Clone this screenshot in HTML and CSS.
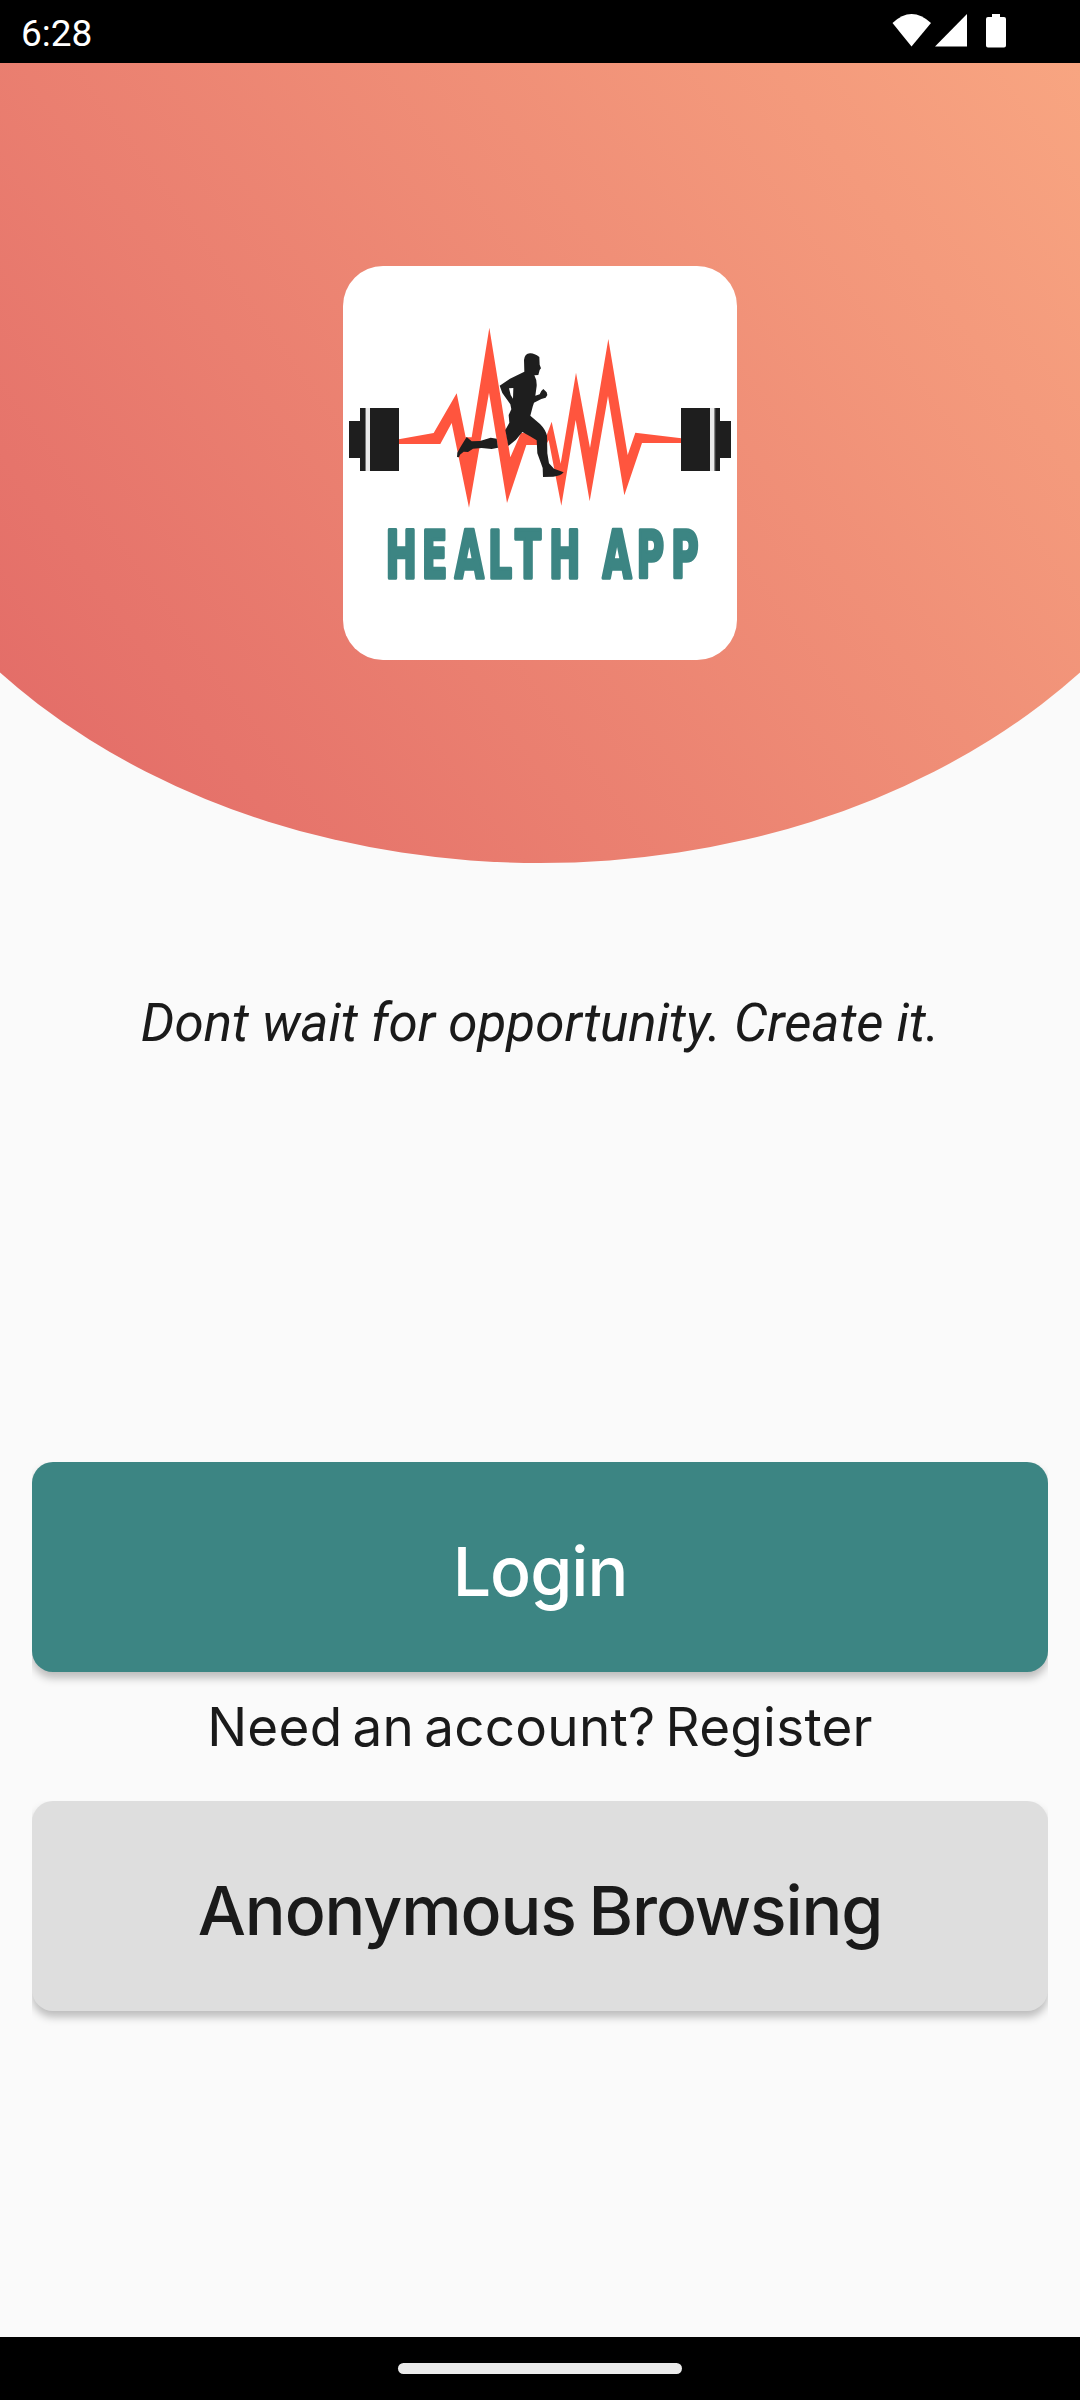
FILE: index.html
```html
<!DOCTYPE html>
<html lang="en">
<head>
<meta charset="utf-8">
<title>Health App</title>
<link rel="stylesheet" href="styles.css">
</head>
<body>
<div class="screen">
  <div class="status-bar">
    <span class="clock">6:28</span>
    <svg class="status-icons" width="116" height="36" viewBox="0 0 116 36" fill="#fff">
      <path d="M0.500 9Q19.500-9 39 9L19.500 32.500Z"/>
      <path d="M43 32.500L75 0V32.500Z"/>
      <path d="M100 0h8v3h4q2 0 2 2v26.500q0 2-2 2H96q-2 0-2-2V5q0-2 2-2h4z"/>
    </svg>
  </div>
  <header class="hero">
    <div class="logo">
      <svg width="394" height="394" viewBox="39 48 1182 1182">
        <!-- heartbeat line -->
        <path fill="#ff553e" d="M206 568L311 549 380 430 407 562 425 562 478 233 541 622 573 548 650 556 665 515 692 641 738 368 780 594 835 267 893 615 916 548 1054 565V579H936L883 736 834 438 779 754 737 510 694 767 656 570 648 585H589L531 759 477 428 417 773 365 519 331 582H206Z"/>
        <!-- dumbbell weights -->
        <g fill="#1e1e1e">
          <path d="M57 513H90V474H207V663H90V624H57Z"/>
          <path d="M1203 513H1170V474H1053V663H1170V624H1203Z"/>
        </g>
        <path fill="#e9e9e9" d="M107 474h13v189h-13zM1140 474h14v189h-14z"/>
        <path fill="#777" d="M105 474h3v189h-3zM1153 474h3v189h-3z"/>
        <!-- runner -->
        <path fill="#1e1e1e" fill-rule="evenodd" d="M583 365L582 330Q584 311 600 310Q612 309 628 321L629 344 633 355 629 360 625 375 613 376Q621 390 620 408L616 437 629 433 634 423 640 417 650 427 652 435 647 443 634 447 612 458 608 470 601 497 630 522Q646 538 651 557L652 610 657 640 672 656 701 667 Q692 678 670 680L639 681 638 654 622 610 620 571 600 559 577 546 558 569 535 588 526 540 538 518 536 495 544 478 541 463 517 429 509 407 540 386ZM537 415L542 435 549 446 550 414ZM410 561L425 574 450 573 482 563 500 566 504 593 485 597 455 594 429 596 414 606 401 605 390 614 387 622 381 621 382 608 391 592Z"/>
        <!-- word mark: letters are placed one by one -->
        <text class="wordmark" transform="translate(0 983) scale(.64 1)" x="260 430 585 741 868 1027 1277 1437 1599">HEALTHAPP</text>
      </svg>
    </div>
  </header>
  <p class="quote">Dont wait for opportunity. Create it.</p>
  <main class="actions">
    <button class="btn btn-primary">Login</button>
    <p class="register">Need an account? Register</p>
    <button class="btn btn-secondary">Anonymous Browsing</button>
  </main>
  <div class="nav-bar"><div class="handle"></div></div>
</div>
</body>
</html>
```
FILE: styles.css
```css
body { margin: 0; }
.screen { width: 1080px; height: 2400px; display: flex; flex-direction: column; background: #fafafa; font-family: Inter, sans-serif; color: #1a1a1a; }
.status-bar { height: 63px; background: #000; color: #fff; display: flex; justify-content: space-between; box-sizing: border-box; padding: 14px 72px 0 21px; }
.clock { font: 37px/40px Roboto, sans-serif; }
.hero { height: 800px; display: flex; align-items: center; justify-content: center; background: linear-gradient(53.5deg, #e26966, #f8a581); clip-path: ellipse(710px 543px at 540px 257px); }
.logo { width: 394px; height: 394px; border-radius: 40px; background: #fff; }
.logo svg { display: block; }
.wordmark { font: bold 196px "DejaVu Sans Condensed", "DejaVu Sans", sans-serif; font-stretch: condensed; fill: #3c8583; stroke: #3c8583; stroke-width: 11px; stroke-linejoin: round; }
.quote { margin: 129px 0 0; font: italic 53px/62px Roboto, sans-serif; letter-spacing: -.03px; text-align: center; }
.actions { margin: 408px 32px 0; }
.btn { display: block; width: 100%; height: 210px; border: 0; border-radius: 21px; padding: 8px 0 0; font: 450 68px/80px Inter, sans-serif; letter-spacing: -1px; color: #1a1a1a; background: #dedede; box-shadow: 0 6px 8px rgba(0, 0, 0, .25); clip-path: inset(0 0 -24px 0); }
.btn-primary { color: #fff; background: #3c8583; }
.btn-secondary { letter-spacing: -1.150px; word-spacing: -4px; }
.register { margin: 0; height: 129px; font-size: 53px; font-weight: 400; word-spacing: -5px; letter-spacing: .25px; text-align: center; line-height: 111px; }
.nav-bar { margin-top: auto; height: 63px; background: #000; display: flex; align-items: center; justify-content: center; }
.handle { width: 284px; height: 11px; border-radius: 6px; background: #ebebeb; }
```
